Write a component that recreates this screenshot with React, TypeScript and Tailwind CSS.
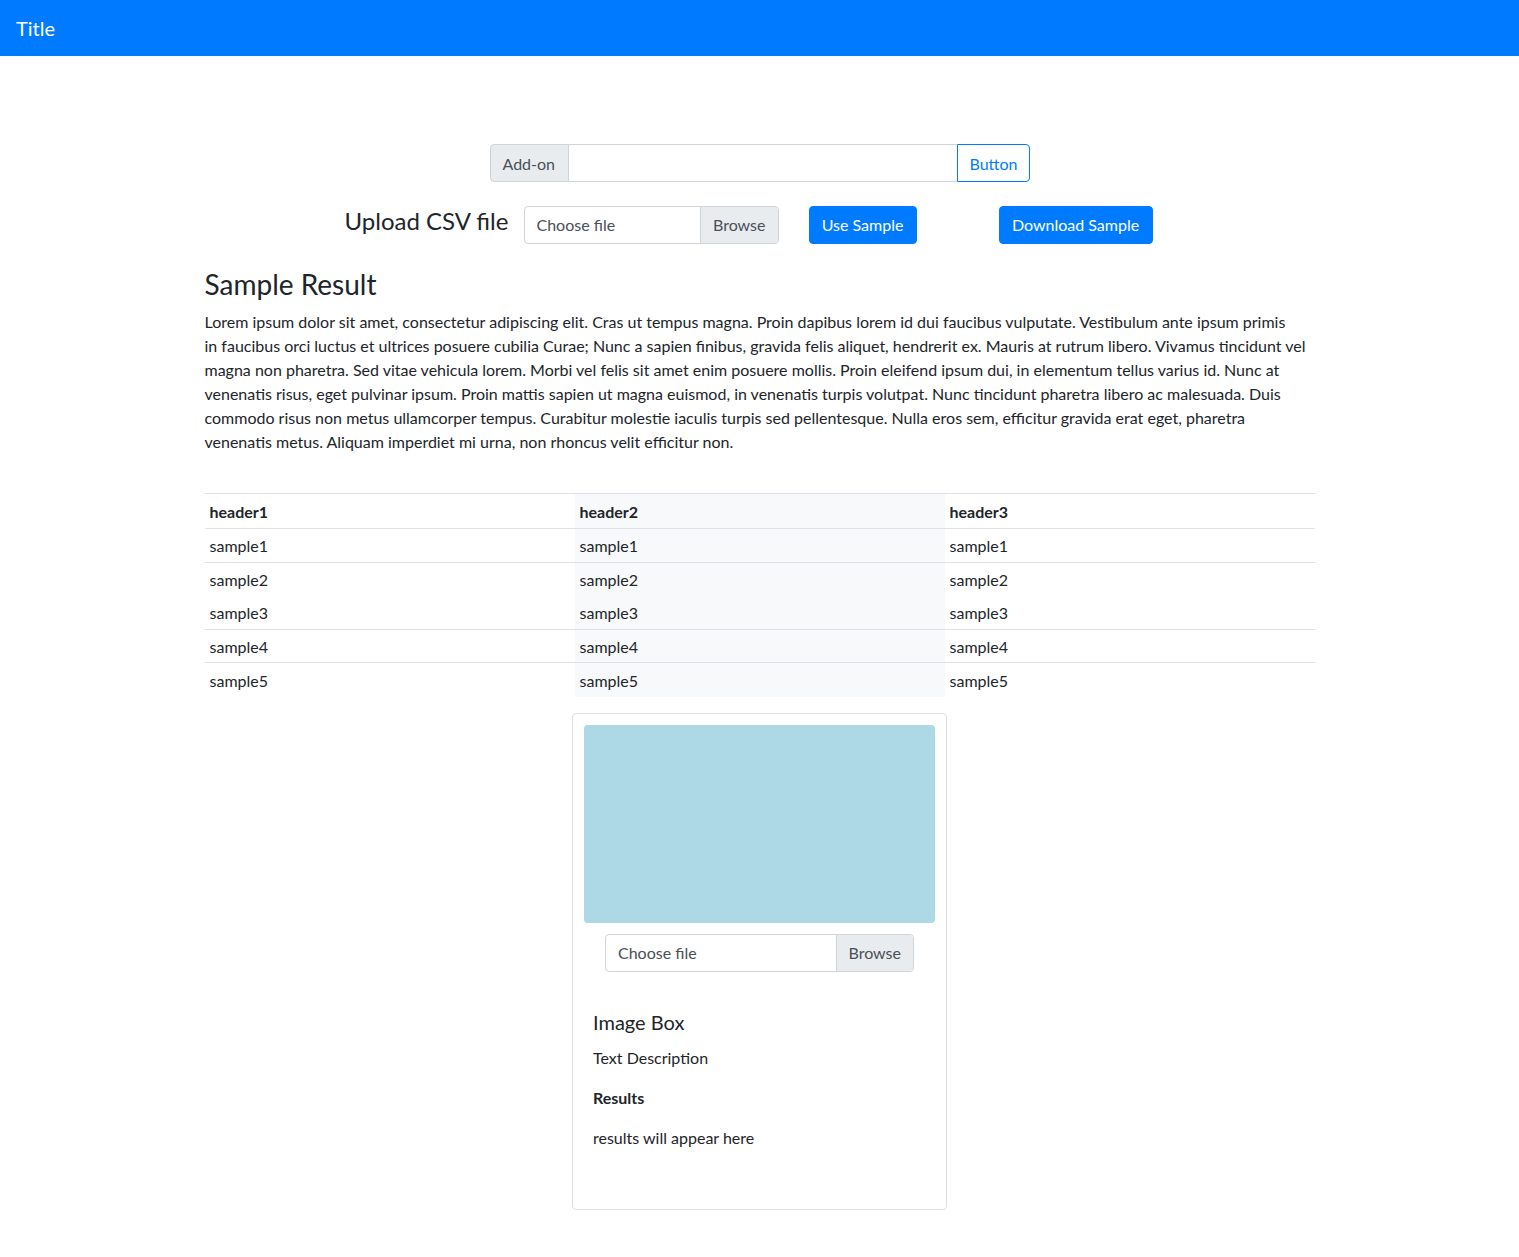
import React from 'react';

const LINES = [
  'Lorem ipsum dolor sit amet, consectetur adipiscing elit. Cras ut tempus magna. Proin dapibus lorem id dui faucibus vulputate. Vestibulum ante ipsum primis',
  'in faucibus orci luctus et ultrices posuere cubilia Curae; Nunc a sapien finibus, gravida felis aliquet, hendrerit ex. Mauris at rutrum libero. Vivamus tincidunt vel',
  'magna non pharetra. Sed vitae vehicula lorem. Morbi vel felis sit amet enim posuere mollis. Proin eleifend ipsum dui, in elementum tellus varius id. Nunc at',
  'venenatis risus, eget pulvinar ipsum. Proin mattis sapien ut magna euismod, in venenatis turpis volutpat. Nunc tincidunt pharetra libero ac malesuada. Duis',
  'commodo risus non metus ullamcorper tempus. Curabitur molestie iaculis turpis sed pellentesque. Nulla eros sem, efficitur gravida erat eget, pharetra',
  'venenatis metus. Aliquam imperdiet mi urna, non rhoncus velit efficitur non.',
];

const ROWS = [1, 2, 3, 4, 5];

const FileInput: React.FC<{ className?: string }> = ({ className = '' }) => (
  <div className={`flex h-[38px] rounded border border-[#ced4da] bg-white text-[#495057] overflow-hidden ${className}`}>
    <span className="flex-1 flex items-center px-3">Choose file</span>
    <span className="flex items-center px-3 bg-[#e9ecef] border-l border-[#ced4da]">Browse</span>
  </div>
);

const App: React.FC = () => {
  return (
    <div className="min-h-screen bg-white text-[#212529] text-base leading-6" style={{ fontFamily: 'Lato, "Open Sans", sans-serif' }}>
      {/* Navbar */}
      <nav className="h-14 bg-[#007bff] flex items-center px-4">
        <span className="text-xl text-white">Title</span>
      </nav>

      <div className="w-[1140px] mx-auto px-[15px]">
        {/* Input group */}
        <div className="mt-[88px] flex justify-center">
          <div className="flex w-[540px] h-[38px]">
            <span className="flex items-center px-3 pt-px bg-[#e9ecef] text-[#495057] border border-[#ced4da] rounded-l w-[79px]">Add-on</span>
            <input className="flex-1 border-y border-[#ced4da] outline-none px-3" />
            <button className="px-3 pt-px border border-[#007bff] text-[#007bff] rounded-r w-[73px]">Button</button>
          </div>
        </div>

        {/* Upload row */}
        <div className="mt-6 flex items-center ml-[140px]">
          <h4 className="w-[179px] text-2xl leading-[1.2] -mt-2">Upload CSV file</h4>
          <FileInput className="w-[255px]" />
          <button className="ml-[30px] h-[38px] w-[108px] rounded bg-[#007bff] text-white border border-[#007bff]">Use Sample</button>
          <button className="ml-[82px] h-[38px] w-[154px] rounded bg-[#007bff] text-white border border-[#007bff]">Download Sample</button>
        </div>

        {/* Sample result */}
        <h3 className="mt-6 mb-2 text-[28px] leading-[1.2]">Sample Result</h3>
        <p className="mb-4">
          {LINES.map((l, i) => (
            <span key={i} className="block whitespace-nowrap">{l}</span>
          ))}
        </p>

        <table className="mt-[39px] w-full border-collapse border-t border-[#dee2e6]">
          <thead>
            <tr className="border-b border-[#dee2e6]">
              <th className="w-1/3 text-left font-bold px-[5px] pt-[2px] h-[35.5px]">header1</th>
              <th className="w-1/3 text-left font-bold px-[5px] pt-[2px] h-[35.5px] bg-[#f8f9fa]">header2</th>
              <th className="w-1/3 text-left font-bold px-[5px] pt-[2px] h-[35.5px]">header3</th>
            </tr>
          </thead>
          <tbody>
            {ROWS.map((n) => (
              <tr key={n} className={n === 2 || n === 5 ? '' : 'border-b border-[#dee2e6]'}>
                <td className="px-[5px] pt-[2px] h-[33.6px]">sample{n}</td>
                <td className="px-[5px] pt-[2px] h-[33.6px] bg-[#f8f9fa]">sample{n}</td>
                <td className="px-[5px] pt-[2px] h-[33.6px]">sample{n}</td>
              </tr>
            ))}
          </tbody>
        </table>

        {/* Card */}
        <div className="mt-4 mb-12 mx-auto w-[375px] border border-[#dfdfdf] rounded p-[11px]">
          <div className="h-[198px] rounded bg-[#add8e6]" />
          <FileInput className="w-[309px] mx-auto mt-[11px]" />
          <div className="px-[9px] pt-[38px] pb-[48px]">
            <h5 className="text-xl leading-[1.2] mb-3">Image Box</h5>
            <p className="mb-4">Text Description</p>
            <p className="mb-4 font-bold">Results</p>
            <p>results will appear here</p>
          </div>
        </div>
      </div>
    </div>
  );
};

export default App;
